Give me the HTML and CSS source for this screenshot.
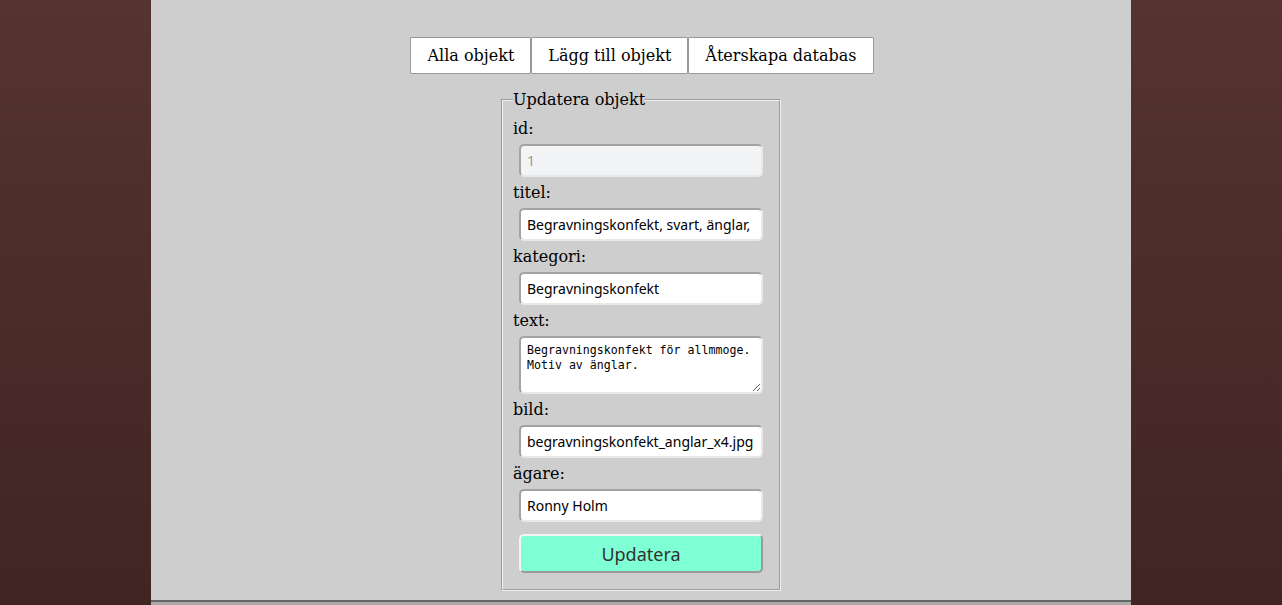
FILE: index.html
```html
<!DOCTYPE html>
<html lang="sv">
<head>
<meta charset="utf-8">
<title>Updatera objekt</title>
<link rel="stylesheet" href="styles.css">
</head>
<body>
<div class="page">
  <nav class="nav">
    <button class="nav-btn">Alla objekt</button><button class="nav-btn">Lägg till objekt</button><button class="nav-btn">Återskapa databas</button>
  </nav>
  <form class="form">
    <fieldset class="fs">
      <legend class="legend">Updatera objekt</legend>
      <label class="lbl">id:</label>
      <input class="field field-ro" type="text" value="1" readonly>
      <label class="lbl">titel:</label>
      <input class="field" type="text" value="Begravningskonfekt, svart, änglar,">
      <label class="lbl">kategori:</label>
      <input class="field" type="text" value="Begravningskonfekt">
      <label class="lbl">text:</label>
      <textarea class="field area">Begravningskonfekt för allmmoge. Motiv av änglar.</textarea>
      <label class="lbl">bild:</label>
      <input class="field" type="text" value="begravningskonfekt_anglar_x4.jpg">
      <label class="lbl">ägare:</label>
      <input class="field" type="text" value="Ronny Holm">
      <button class="submit" type="button">Updatera</button>
    </fieldset>
  </form>
  <footer class="footer"></footer>
</div>
</body>
</html>
```
FILE: styles.css
```css
html, body {
  margin: 0;
  padding: 0;
  height: 100%;
}
body {
  background: linear-gradient(to bottom, #553330 0%, #402523 100%);
  font-family: "DejaVu Serif", serif;
  font-size: 16px;
  color: #000;
}
.page {
  width: 980px;
  margin: 0 auto;
  min-height: 100%;
  background: #cecece;
  display: flex;
  flex-direction: column;
  align-items: center;
  padding-top: 37px;
  box-sizing: border-box;
}
.nav {
  display: flex;
  margin-bottom: 16px;
  margin-left: 2px;
}
.nav-btn {
  font-family: "DejaVu Serif", serif;
  font-size: 16px;
  line-height: 19px;
  color: #000;
  background: #fff;
  border: 1px solid #999;
  border-radius: 1px;
  padding: 8px 16px;
  margin: 0;
}
.form {
  margin: 0;
}
.fs {
  width: 256px;
  margin: 0;
  padding: 10px 10px 10px;
  border: 2px groove #f0f0f0;
  display: flex;
  flex-direction: column;
}
.legend {
  padding: 0;
  font-size: 16px;
  line-height: 19px;
}
.lbl {
  display: block;
  line-height: 19px;
}
.field {
  display: block;
  box-sizing: border-box;
  width: 244px;
  height: 33px;
  margin: 6px 6px;
  padding: 6px 6px;
  border: 2px solid #aaa;
  border-color: #a3a3a3 #e8e8e8 #e8e8e8 #a3a3a3;
  border-radius: 5px;
  background: #fff;
  font-family: "Noto Sans", "Open Sans", sans-serif;
  font-size: 14px;
  color: #000;
  outline: none;
}
.field-ro {
  background: #f3f4f6;
  color: #999;
}
.area {
  height: 58px;
  padding: 5px 6px;
  font-family: "DejaVu Sans Mono", monospace;
  font-size: 11.6px;
  line-height: 15px;
  resize: vertical;
}
.submit {
  display: block;
  box-sizing: border-box;
  width: 244px;
  height: 39px;
  margin: 6px 6px 6px;
  border: 2px solid #999;
  border-color: #f4f4f4 #9a9a9a #9a9a9a #f4f4f4;
  border-radius: 5px;
  background: #7fffd4;
  font-family: "Noto Sans", "Open Sans", sans-serif;
  font-size: 18px;
  color: #333;
}
.footer {
  align-self: stretch;
  margin-top: 9px;
  flex: 1;
  min-height: 4px;
  border-top: 2px solid #666;
  background: #aaa;
}
```
